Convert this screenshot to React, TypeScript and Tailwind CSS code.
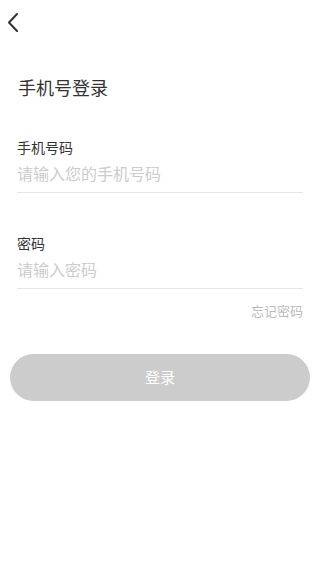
import React from "react";

export default function App() {
  return (
    <div
      className="w-[320px] h-[579px] bg-white flex flex-col"
      style={{ fontFamily: '"Noto Sans CJK SC", "Noto Sans", sans-serif' }}
    >
      <div className="h-[44px] flex items-center pl-[6px]">
        <svg width="14" height="20" viewBox="0 0 14 20" fill="none">
          <path d="M11 2 L3 10.5 L11 19" stroke="#333333" strokeWidth="2" strokeLinecap="round" strokeLinejoin="round" />
        </svg>
      </div>
      <div className="px-[18px] mt-[31px] text-[18px] leading-[24px] text-[#333333]">手机号登录</div>
      <div className="px-[17px] mt-[38px] flex flex-col">
        <div className="text-[14px] leading-[20px] text-[#333333]">手机号码</div>
        <div className="mt-[5px] pb-[8px] border-b border-[#e6e6e6] text-[16px] leading-[22px] text-[#cccccc]">
          请输入您的手机号码
        </div>
        <div className="mt-[40px] text-[14px] leading-[20px] text-[#333333]">密码</div>
        <div className="mt-[5px] pb-[8px] border-b border-[#e6e6e6] text-[16px] leading-[22px] text-[#cccccc]">
          请输入密码
        </div>
        <div className="mt-[13px] self-end text-[13px] leading-[18px] text-[#bbbbbb]">忘记密码</div>
      </div>
      <div className="px-[10px] mt-[34px]">
        <div className="h-[47px] rounded-full bg-[#cccccc] flex items-center justify-center text-white text-[15px]">
          登录
        </div>
      </div>
    </div>
  );
}
